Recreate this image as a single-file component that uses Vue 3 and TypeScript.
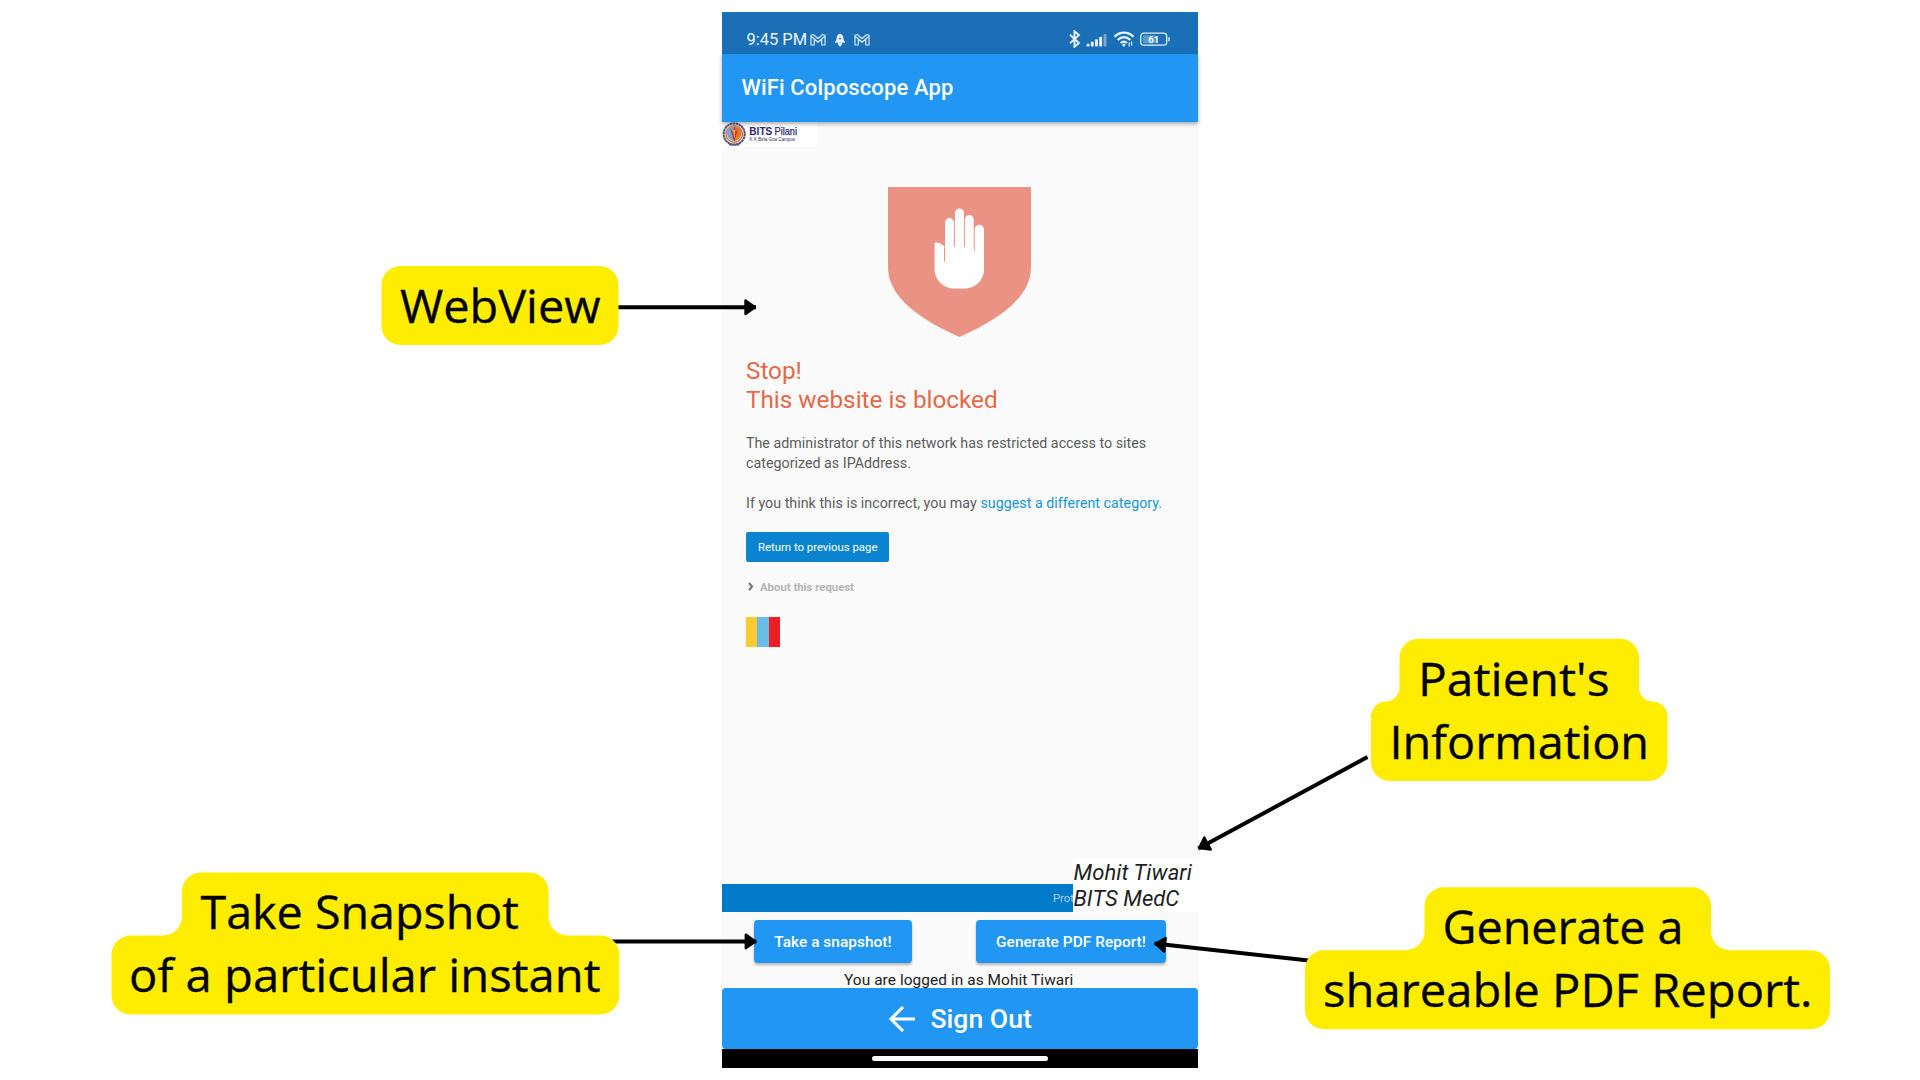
<script setup lang="ts">
interface CalloutLine {
  text: string
  x: number
  y: number
  width: number
}

interface Callout {
  id: string
  shape: string
  lines: CalloutLine[]
}

interface Arrow {
  id: string
  x1: number
  y1: number
  x2: number
  y2: number
}

const callouts: Callout[] = [
  {
    id: 'webview',
    shape: 'M400.5 266H599.5A19 19 0 0 1 618.5 285V326A19 19 0 0 1 599.5 345H400.5A19 19 0 0 1 381.5 326V285A19 19 0 0 1 400.5 266Z',
    lines: [{ text: 'WebView', x: 400, y: 322.9, width: 200.5 }],
  },
  {
    id: 'patient',
    shape: 'M1418.5 638.7H1620A19 19 0 0 1 1639 657.7V687.5A14 14 0 0 0 1653 701.5A15 15 0 0 1 1667.5 716.5V762A19 19 0 0 1 1648.5 781H1390A19 19 0 0 1 1371 762V716.5A15 15 0 0 1 1386 701.5A14 14 0 0 0 1399.5 687.5V657.7A19 19 0 0 1 1418.5 638.7Z',
    lines: [
      { text: "Patient's", x: 1418, y: 696.2, width: 191.5 },
      { text: 'Information', x: 1389.5, y: 759.2, width: 259.5 },
    ],
  },
  {
    id: 'snapshot',
    shape: 'M201 872.5H529.6A19 19 0 0 1 548.6 891.5V916.5A19 19 0 0 0 567.6 935.5H600.3A19 19 0 0 1 619.3 954.5V995.5A19 19 0 0 1 600.3 1014.5H130.5A19 19 0 0 1 111.5 995.5V954.5A19 19 0 0 1 130.5 935.5H163A19 19 0 0 0 182 916.5V891.5A19 19 0 0 1 201 872.5Z',
    lines: [
      { text: 'Take Snapshot', x: 200.5, y: 929.3, width: 318.5 },
      { text: 'of a particular instant', x: 129, y: 992.2, width: 471.5 },
    ],
  },
  {
    id: 'report',
    shape: 'M1443.5 887.3H1692A19 19 0 0 1 1711 906.3V931.3A19 19 0 0 0 1730 950.3H1811A19 19 0 0 1 1830 969.3V1010.3A19 19 0 0 1 1811 1029.3H1324A19 19 0 0 1 1305 1010.3V969.3A19 19 0 0 1 1324 950.3H1405.5A19 19 0 0 0 1424.5 931.3V906.3A19 19 0 0 1 1443.5 887.3Z',
    lines: [
      { text: 'Generate a', x: 1442.5, y: 944.2, width: 241 },
      { text: 'shareable PDF Report.', x: 1323, y: 1007.2, width: 489.5 },
    ],
  },
]

const arrows: Arrow[] = [
  { id: 'webview', x1: 617, y1: 307.3, x2: 756, y2: 307.3 },
  { id: 'patient', x1: 1367.5, y1: 757, x2: 1198.3, y2: 848.6 },
  { id: 'snapshot', x1: 600, y1: 941.4, x2: 756.3, y2: 941.4 },
  { id: 'report', x1: 1320, y1: 961.8, x2: 1154.5, y2: 943.6 },
]
</script>

<template>
  <main class="canvas">
    <section class="phone">
      <header class="status">
        <span class="time">9:45 PM</span>
        <svg class="notices" width="62" height="14" viewBox="0 0 62 14" fill="none" stroke="#d6e8f8" stroke-width="1.2" stroke-linejoin="round">
          <path d="M1 12V2.2L3.2 1.5 8 5.5 12.8 1.5 15 2.2V12H11.7V6.3L8 9.4 4.3 6.3V12ZM1 3.2L8 9 15 3.2" />
          <path d="M30 .6C27.2 1.4 26.5 4 26.5 6.6L24.8 9.7H35.2L33.5 6.6C33.5 4 32.8 1.4 30 .6Z" fill="#e6f1fb" stroke="none" />
          <circle cx="30" cy="5.4" r="1" fill="#1a6fb7" stroke="none" />
          <path d="M28.3 10.7H31.7L30 12.8Z" fill="#e6f1fb" stroke="#e6f1fb" />
          <path d="M45 12V2.2L47.2 1.5 52 5.5 56.8 1.5 59 2.2V12H55.7V6.3L52 9.4 48.3 6.3V12ZM45 3.2L52 9 59 3.2" />
        </svg>
        <svg class="system" width="102" height="18" viewBox="0 0 102 18" fill="none" stroke="#e6f1fb">
          <path d="M1 4.7L10 13 5.5 16.8V1.2L10 5 1 13.3" stroke-width="1.9" />
          <g stroke="none" fill="#e6f1fb">
            <rect x="17.6" y="13.8" width="2.9" height="2.7" rx=".8" />
            <rect x="21.8" y="11.8" width="2.9" height="4.7" rx=".8" />
            <rect x="26" y="9.3" width="2.9" height="7.2" rx=".8" />
            <rect x="30.2" y="6.8" width="2.9" height="9.7" rx=".8" />
            <rect x="34.6" y="4" width="2.9" height="12.5" rx=".8" opacity=".45" />
          </g>
          <path d="M45.5 6.8C51 1.3 59 1.3 64.5 6.8M48.7 10C52.5 6.2 57.5 6.2 61.3 10M51.7 13C53.7 11.2 56 11.2 58 13" stroke-width="2.2" />
          <circle cx="54.8" cy="15" r="1.5" fill="#e6f1fb" stroke="none" />
          <path d="M60.2 16.5V12.5M62.6 11.5V15.5" stroke-width="1.2" />
          <rect x="71.7" y="3.2" width="26" height="12" rx="3.2" stroke-width="1.3" />
          <rect x="73.8" y="5.2" width="13" height="8" rx="1.5" fill="#5c9bd0" stroke="none" />
          <path d="M100 7.2V11.2" stroke-width="1.4" />
          <text x="84.7" y="12.6" class="level">61</text>
        </svg>
      </header>

      <div class="appbar"><h1>WiFi Colposcope App</h1></div>

      <section class="webview">
        <div class="brand">
          <svg width="25" height="25" viewBox="0 0 25 25">
            <circle cx="12.2" cy="12" r="10.6" fill="#f4e3d4" stroke="#5b4f7c" stroke-width="2" stroke-dasharray="2.6 .4" />
            <circle cx="12.2" cy="12" r="8.3" fill="#f3cf9f" stroke="#b5623c" />
            <path d="M5 9C6 6 9 4.5 12 4.5V19C8 18.5 4.6 14.5 5 9Z" fill="#74a5d8" />
            <path d="M19.5 9C18.5 6 15 4.5 12 4.5V19C16.5 18.5 19.9 14.5 19.5 9Z" fill="#e9792f" />
            <path d="M8 6L12.2 19.5 16.5 6 14 10 12.2 4 10.5 10Z" fill="#c92c2c" />
            <path d="M11.2 8H13.2L12.2 17Z" fill="#ffd43e" />
            <path d="M6.5 20.7Q12.2 23.5 18 20.7L17.3 23.6H7.2Z" fill="#655581" />
          </svg>
          <svg width="70" height="25" viewBox="0 0 70 25" class="brand-name">
            <text x="2.3" y="12.6" textLength="23" lengthAdjust="spacingAndGlyphs" class="brand-bold">BITS</text>
            <text x="27.5" y="12.6" textLength="22.5" lengthAdjust="spacingAndGlyphs" class="brand-light">Pilani</text>
            <text x="2.6" y="18.6" textLength="45.5" lengthAdjust="spacingAndGlyphs" class="brand-small">K K Birla Goa Campus</text>
          </svg>
        </div>

        <svg class="shield" width="143" height="150" viewBox="0 0 143 150">
          <path d="M0 0H143V80C143 110 112 132 71.5 150C31 132 0 110 0 80Z" fill="#ea9384" />
          <g fill="#fff">
            <path d="M46.6 55.5C51.5 55.3 55.2 57.5 57 60.5V74H96V82C96 94 87 101.6 76 101.6H66.5C55.5 101.6 46.6 93 46.6 82Z" />
            <path d="M57.1 80V35.5A4.4 4.4 0 0 1 65.9 35.5V80Z" />
            <path d="M66.9 80V26A4.5 4.5 0 0 1 75.9 26V80Z" />
            <path d="M76.9 80V32.5A4.4 4.4 0 0 1 85.7 32.5V80Z" />
            <path d="M86.7 80V42.5A4.65 4.65 0 0 1 96 42.5V82L86 85Z" />
            <path d="M65.5 60H77.5V80H65.5ZM76.4 61.5H86V80H76.4ZM85 64.5H87.2V80H85Z" />
          </g>
          <path d="M56.5 60.5V74.5" stroke="#ea9384" />
        </svg>

        <div class="message">
          <h2>Stop!<br />This website is blocked</h2>
          <p>The administrator of this network has restricted access to sites<br />categorized as IPAddress.</p>
          <p class="suggest">If you think this is incorrect, you may <a>suggest a different category.</a></p>
          <button class="return">Return to previous page</button>
          <div class="about">
            <svg width="6" height="10" viewBox="0 0 6 10"><path d="M1 1L4 4.6 1 8.2" fill="none" stroke="#77777f" stroke-width="2.2" /></svg>
            <span>About this request</span>
          </div>
          <div class="flag"><i></i><i></i><i></i></div>
        </div>

        <div class="protected">
          <span>Prot</span>
        </div>
        <div class="patient">Mohit Tiwari<br />BITS MedC</div>
      </section>

      <div class="actions">
        <button class="snap">Take a snapshot!</button>
        <button class="pdf">Generate PDF Report!</button>
      </div>
      <p class="login">You are logged in as Mohit Tiwari</p>
      <button class="signout">
        <svg width="26" height="26" viewBox="0 0 26 26"><path d="M26 13H2M14 1L2 13 14 25" fill="none" stroke="#fff" stroke-width="3.1" /></svg>
        <span>Sign Out</span>
      </button>
      <footer class="nav"><i></i></footer>
    </section>

    <svg class="annotations" width="1920" height="1080" viewBox="0 0 1920 1080">
      <defs>
        <marker id="head" markerUnits="userSpaceOnUse" markerWidth="16" markerHeight="20" refX="12.5" refY="10" orient="auto">
          <path d="M2 3.2L11.5 10 2 16.8Z" stroke="#000" stroke-width="2.4" stroke-linejoin="round" />
        </marker>
      </defs>
      <line v-for="a in arrows" :key="a.id" :x1="a.x1" :y1="a.y1" :x2="a.x2" :y2="a.y2" class="arrow" marker-end="url(#head)" />
      <g v-for="c in callouts" :key="c.id">
        <path :d="c.shape" fill="#ffed00" />
        <text v-for="l in c.lines" :key="l.text" :x="l.x" :y="l.y" :textLength="l.width" lengthAdjust="spacingAndGlyphs" class="label">{{ l.text }}</text>
      </g>
    </svg>
  </main>
</template>

<style>
body {
  margin: 0;
  overflow: hidden;
  background: #fff;
}
</style>

<style scoped>
.canvas {
  position: relative;
  box-sizing: border-box;
  width: 1920px;
  height: 1080px;
  padding: 12px 0 0 722.4px;
  font-family: Roboto, sans-serif;
  background: #fff;
}

h1, h2, p {
  margin: 0;
  font-weight: 400;
}

button {
  display: block;
  padding: 0;
  border: 0;
  font-family: inherit;
  color: #fff;
  white-space: nowrap;
}

.phone {
  display: flex;
  flex-direction: column;
  width: 475.6px;
  height: 1056px;
  background: #fafafa;
}

.status {
  display: flex;
  height: 42px;
  flex: none;
  color: #eaf4fc;
  background: #1a6fb7;
}

.time {
  width: 62px;
  margin-left: 24px;
  font-size: 16.5px;
  line-height: 55px;
  white-space: nowrap;
}

.notices {
  margin: 20.5px 0 0 1.5px;
}

.system {
  margin: 18px 0 0 197px;
}

.level {
  fill: #fff;
  stroke: none;
  font: 700 9.5px Roboto, sans-serif;
  text-anchor: middle;
}

.appbar {
  position: relative;
  z-index: 1;
  flex: none;
  height: 68px;
  background: #2196f3;
  box-shadow: 0 2px 4px rgba(0, 0, 0, 0.32);
}

.appbar h1 {
  margin-left: 19px;
  font-size: 22px;
  font-weight: 500;
  letter-spacing: 0.14px;
  line-height: 68px;
  color: #fff;
}

.webview {
  position: relative;
  display: flex;
  flex-direction: column;
  flex: none;
  height: 790px;
}

.brand {
  display: flex;
  width: 95px;
  height: 25px;
  background: #fff;
}

.brand-bold, .brand-light, .brand-small {
  font-family: "Liberation Sans", Arial, sans-serif;
  fill: #2d2a70;
}

.brand-bold {
  font-size: 10px;
  font-weight: 700;
}

.brand-light {
  font-size: 10px;
  stroke: #2d2a70;
  stroke-width: 0.25px;
}

.brand-small {
  font-size: 5.3px;
}

.shield {
  flex: none;
  margin: 40px 0 0 165.8px;
}

.message {
  display: flex;
  flex-direction: column;
  align-items: flex-start;
  margin: 20px 0 0 23.6px;
}

.message h2 {
  font-size: 24.3px;
  line-height: 28.5px;
  color: #e2694a;
}

.message p {
  margin-top: 19px;
  font-size: 14.25px;
  letter-spacing: 0.015px;
  line-height: 20px;
  color: #5c5c5c;
  white-space: nowrap;
}

.message .suggest {
  margin-top: 20px;
  letter-spacing: 0.025px;
}

.suggest a {
  color: #1697d5;
}

.return {
  width: 143.5px;
  height: 29.5px;
  margin-top: 19px;
  border-radius: 2px;
  font-size: 11.35px;
  background: #0a84cf;
}

.about {
  display: flex;
  align-items: center;
  gap: 6px;
  height: 20px;
  margin-top: 15px;
  padding-left: 2px;
  font-size: 11.35px;
  font-weight: 700;
  color: #b4b4b4;
}

.flag {
  display: flex;
  width: 34px;
  height: 29.5px;
  margin-top: 20.5px;
}

.flag i {
  flex: 1;
  background: #fbca2e;
}

.flag i:nth-child(2) {
  background: #6bbde7;
}

.flag i:nth-child(3) {
  background: #ee1c25;
}

.protected {
  height: 28px;
  margin-top: auto;
  padding-left: 330.5px;
  font-size: 11.3px;
  line-height: 29px;
  color: #a9d0ec;
  background: #007ac9;
}

.patient {
  position: absolute;
  right: 0;
  bottom: 0;
  box-sizing: border-box;
  width: 124.5px;
  height: 53px;
  padding-top: 0.8px;
  font-size: 22px;
  letter-spacing: 0.06px;
  font-style: italic;
  line-height: 26.6px;
  white-space: nowrap;
  color: #1e1e1e;
  background: #fff;
}

.actions {
  display: flex;
  gap: 64px;
  height: 43.5px;
  margin: 7.7px 0 0 31.6px;
}

.actions button {
  border-radius: 4px;
  font-size: 15.4px;
  font-weight: 500;
  line-height: 45px;
  background: #2196f3;
  box-shadow: 0 2px 3px rgba(0, 0, 0, 0.28);
}

.snap {
  width: 158px;
  letter-spacing: 0.05px;
}

.pdf {
  width: 190px;
  letter-spacing: 0.06px;
}

.login {
  height: 25.3px;
  padding-right: 3px;
  text-align: center;
  font-size: 15.4px;
  letter-spacing: 0.08px;
  line-height: 34.6px;
  color: #222;
}

.signout {
  display: flex;
  align-items: center;
  gap: 15.5px;
  flex: none;
  height: 60.5px;
  padding-left: 166.6px;
  border-radius: 4px;
  font-size: 26.6px;
  font-weight: 500;
  background: #2196f3;
}

.nav {
  display: flex;
  align-items: center;
  justify-content: center;
  flex: 1;
  background: #000;
}

.nav i {
  width: 176px;
  height: 4.5px;
  border-radius: 2.5px;
  background: #fff;
}

.annotations {
  position: absolute;
  z-index: 2;
  left: 0;
  top: 0;
}

.arrow {
  stroke: #000;
  stroke-width: 4;
}

.label {
  font: 400 45px "Open Sans", "Noto Sans", sans-serif;
  fill: #000;
  stroke: #000;
  stroke-width: 0.3px;
}
</style>
